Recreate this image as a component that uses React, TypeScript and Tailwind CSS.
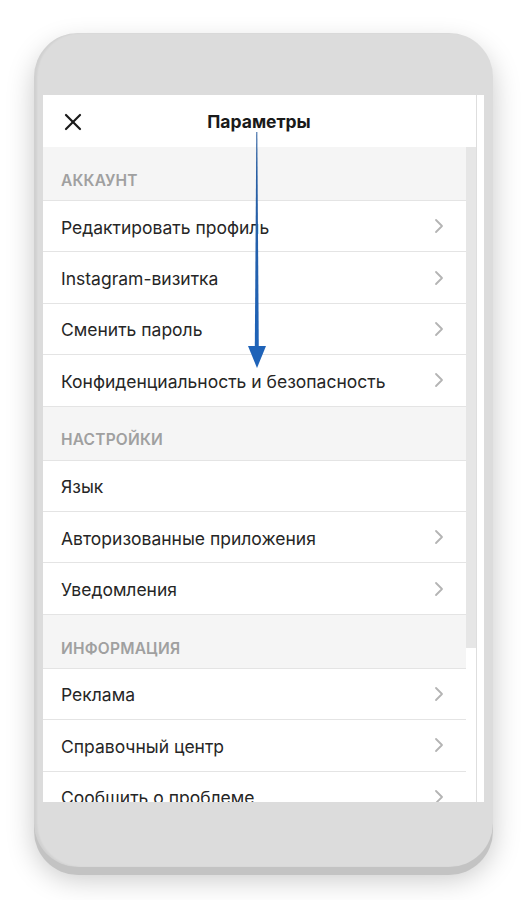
import React from "react";

const font = { fontFamily: "Inter, 'Noto Sans', sans-serif" };

function Chevron() {
  return (
    <svg width="10" height="16" viewBox="0 0 10 16" className="shrink-0">
      <polyline points="2,2 8,8 2,14" fill="none" stroke="#b4b4b4" strokeWidth="1.8" strokeLinecap="round" strokeLinejoin="round" />
    </svg>
  );
}

function Row({ label, chevron = true }: { label: string; chevron?: boolean }) {
  return (
    <div className="flex items-center justify-between shrink-0 bg-white border-b border-[#e4e4e4] pl-[18px] pr-[22px] h-[51.4px]">
      <span className="text-[17.5px] text-[#262626] mt-[3px]">{label}</span>
      {chevron && <Chevron />}
    </div>
  );
}

function Section({ label }: { label: string }) {
  return (
    <div className="flex items-center shrink-0 bg-[#f5f5f5] border-b border-[#e4e4e4] pl-[18px] h-[54px] pt-[14px]">
      <span className="text-[15.5px] font-semibold text-[#a0a0a0] tracking-[0.2px]">{label}</span>
    </div>
  );
}

export default function App() {
  return (
    <div className="w-[531px] h-[900px] bg-white overflow-hidden relative" style={font}>
      <div className="ml-[34px] mt-[33px] w-[459px] h-[834px] rounded-[44px] bg-[#dcdcdc] shadow-[0_8px_0_#c3c3c3,0_12px_28px_rgba(0,0,0,0.22),inset_3px_0_2px_rgba(0,0,0,0.05)] pt-[62px] pl-[9px]">
        <div className="w-[441px] h-[707px] bg-white flex flex-col overflow-hidden">
          <div className="flex h-full">
            <div className="w-[433px] flex flex-col">
              <div className="h-[52px] relative flex items-center justify-center bg-white shrink-0">
                <svg width="18" height="18" viewBox="0 0 18 18" className="absolute left-[21px] top-[18px]">
                  <line x1="2" y1="2" x2="16" y2="16" stroke="#1a1a1a" strokeWidth="2.2" strokeLinecap="round" />
                  <line x1="16" y1="2" x2="2" y2="16" stroke="#1a1a1a" strokeWidth="2.2" strokeLinecap="round" />
                </svg>
                <span className="text-[17.5px] font-bold text-[#1a1a1a] ml-[-1px] mt-[2px]">Параметры</span>
              </div>
              <div className="flex flex-1 overflow-hidden">
                <div className="w-[423px] flex flex-col">
                  <Section label="АККАУНТ" />
                  <Row label="Редактировать профиль" />
                  <Row label="Instagram-визитка" />
                  <Row label="Сменить пароль" />
                  <Row label="Конфиденциальность и безопасность" />
                  <Section label="НАСТРОЙКИ" />
                  <Row label="Язык" chevron={false} />
                  <Row label="Авторизованные приложения" />
                  <Row label="Уведомления" />
                  <Section label="ИНФОРМАЦИЯ" />
                  <Row label="Реклама" />
                  <Row label="Справочный центр" />
                  <Row label="Сообщить о проблеме" />
                </div>
                <div className="w-[10px] flex flex-col">
                  <div className="h-[501px] shrink-0 bg-[#e6e6e6]" />
                  <div className="flex-1 bg-white" />
                </div>
              </div>
            </div>
            <div className="w-[8px] border-l border-[#dedede] bg-white" />
          </div>
        </div>
      </div>
      <svg className="absolute left-[246px] top-[132px]" width="22" height="240" viewBox="0 0 22 240">
        <defs>
          <linearGradient id="ag" x1="0" y1="0" x2="0" y2="1">
            <stop offset="0" stopColor="#2a5d9e" />
            <stop offset="1" stopColor="#1f63b8" />
          </linearGradient>
        </defs>
        <polygon points="10.3,0 11.3,0 12.8,218 8.8,218" fill="url(#ag)" />
        <polygon points="2,214 20,214 11,236" fill="#1f63b8" />
      </svg>
    </div>
  );
}
